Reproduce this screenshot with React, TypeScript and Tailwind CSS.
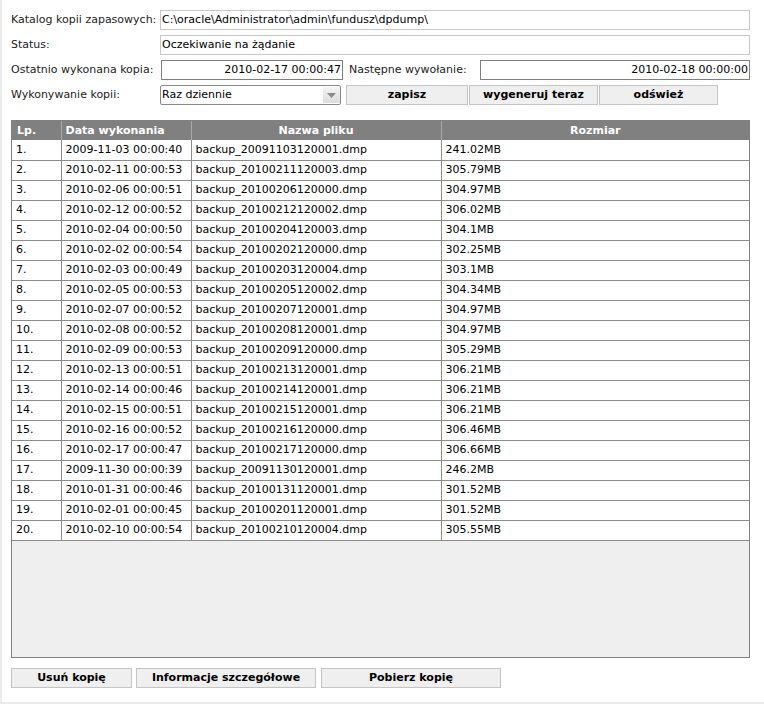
const rows: [string, string, string][] = [
  ['2009-11-03 00:00:40', 'backup_20091103120001.dmp', '241.02MB'],
  ['2010-02-11 00:00:53', 'backup_20100211120003.dmp', '305.79MB'],
  ['2010-02-06 00:00:51', 'backup_20100206120000.dmp', '304.97MB'],
  ['2010-02-12 00:00:52', 'backup_20100212120002.dmp', '306.02MB'],
  ['2010-02-04 00:00:50', 'backup_20100204120003.dmp', '304.1MB'],
  ['2010-02-02 00:00:54', 'backup_20100202120000.dmp', '302.25MB'],
  ['2010-02-03 00:00:49', 'backup_20100203120004.dmp', '303.1MB'],
  ['2010-02-05 00:00:53', 'backup_20100205120002.dmp', '304.34MB'],
  ['2010-02-07 00:00:52', 'backup_20100207120001.dmp', '304.97MB'],
  ['2010-02-08 00:00:52', 'backup_20100208120001.dmp', '304.97MB'],
  ['2010-02-09 00:00:53', 'backup_20100209120000.dmp', '305.29MB'],
  ['2010-02-13 00:00:51', 'backup_20100213120001.dmp', '306.21MB'],
  ['2010-02-14 00:00:46', 'backup_20100214120001.dmp', '306.21MB'],
  ['2010-02-15 00:00:51', 'backup_20100215120001.dmp', '306.21MB'],
  ['2010-02-16 00:00:52', 'backup_20100216120000.dmp', '306.46MB'],
  ['2010-02-17 00:00:47', 'backup_20100217120000.dmp', '306.66MB'],
  ['2009-11-30 00:00:39', 'backup_20091130120001.dmp', '246.2MB'],
  ['2010-01-31 00:00:46', 'backup_20100131120001.dmp', '301.52MB'],
  ['2010-02-01 00:00:45', 'backup_20100201120001.dmp', '301.52MB'],
  ['2010-02-10 00:00:54', 'backup_20100210120004.dmp', '305.55MB'],
];

const btn =
  'h-[20px] border border-[#c4c4c4] bg-[#efefef] text-[11px] font-bold text-black leading-[18px] text-center';
const label = 'w-[149px] shrink-0 text-[#222]';

export default function App() {
  return (
    <div
      className="h-[704px] w-[764px] border-b-2 border-l-2 border-[#ebebeb] bg-white pl-[9px] pt-[10px] text-[11px] leading-[14px] text-black"
      style={{ fontFamily: '"DejaVu Sans", Verdana, sans-serif' }}
    >
      <div className="w-[739px] space-y-[5px]">
        <div className="flex h-[20px] items-center">
          <span className={label}>Katalog kopii zapasowych:</span>
          <div className="flex h-[20px] flex-1 items-center border border-[#c8c8c8] pl-[1px]">
            C:\oracle\Administrator\admin\fundusz\dpdump\
          </div>
        </div>
        <div className="flex h-[20px] items-center">
          <span className={label}>Status:</span>
          <div className="flex h-[20px] flex-1 items-center border border-[#c8c8c8] pl-[1px]">
            Oczekiwanie na żądanie
          </div>
        </div>
        <div className="flex h-[20px] items-center">
          <span className={label}>Ostatnio wykonana kopia:</span>
          <div className="ml-[1px] flex h-[20px] w-[182px] items-center justify-end border border-[#7f7f7f] pr-[1px]">
            2010-02-17 00:00:47
          </div>
          <span className="ml-[6px] w-[131px] text-[#222]">Następne wywołanie:</span>
          <div className="flex h-[20px] flex-1 items-center justify-end border border-[#7f7f7f] pr-[1px]">
            2010-02-18 00:00:00
          </div>
        </div>
        <div className="flex h-[20px] items-center">
          <span className={label}>Wykonywanie kopii:</span>
          <div className="flex h-[20px] w-[181px] items-center rounded-[2px] border border-[#8a8a8a] pl-[1px]">
            <span className="flex-1">Raz dziennie</span>
            <span className="flex h-[16px] w-[17px] items-center justify-center bg-gradient-to-b from-[#f4f4f4] to-[#dcdcdc]">
              <svg width="9" height="5" viewBox="0 0 9 5">
                <path d="M0 0h9L4.5 5z" fill="#8a8a8a" />
              </svg>
            </span>
          </div>
          <div className="ml-[5px] flex">
            <div className={`${btn} w-[122px]`}>zapisz</div>
            <div className={`${btn} ml-[1px] w-[129px]`}>wygeneruj teraz</div>
            <div className={`${btn} ml-[1px] w-[119px]`}>odśwież</div>
          </div>
        </div>
      </div>

      <div className="mt-[15px] h-[538px] w-[739px] overflow-hidden border border-[#808080] bg-[#efefef]">
        <table className="w-full border-collapse">
          <colgroup>
            <col className="w-[49px]" />
            <col className="w-[130px]" />
            <col className="w-[250px]" />
            <col />
          </colgroup>
          <thead>
            <tr className="h-[19px] bg-[#808080] font-bold text-white">
              <th className="border-r border-[#a8a8a8] pl-[5px] text-left font-bold">Lp.</th>
              <th className="border-r border-[#a8a8a8] pl-[4px] text-left font-bold">Data wykonania</th>
              <th className="border-r border-[#a8a8a8] text-center font-bold">Nazwa pliku</th>
              <th className="text-center font-bold">Rozmiar</th>
            </tr>
          </thead>
          <tbody>
            {rows.map(([date, name, size], i) => (
              <tr key={name} className="h-[20px] border-b border-[#8c8c8c] bg-white">
                <td className="border-r border-[#8c8c8c] pl-[4px]">{i + 1}.</td>
                <td className="border-r border-[#8c8c8c] pl-[4px]">{date}</td>
                <td className="border-r border-[#8c8c8c] pl-[4px]">{name}</td>
                <td className="pl-[4px]">{size}</td>
              </tr>
            ))}
          </tbody>
        </table>
      </div>

      <div className="mt-[10px] flex">
        <div className={`${btn} w-[121px]`}>Usuń kopię</div>
        <div className={`${btn} ml-[4px] w-[180px]`}>Informacje szczegółowe</div>
        <div className={`${btn} ml-[5px] w-[180px]`}>Pobierz kopię</div>
      </div>
    </div>
  );
}
